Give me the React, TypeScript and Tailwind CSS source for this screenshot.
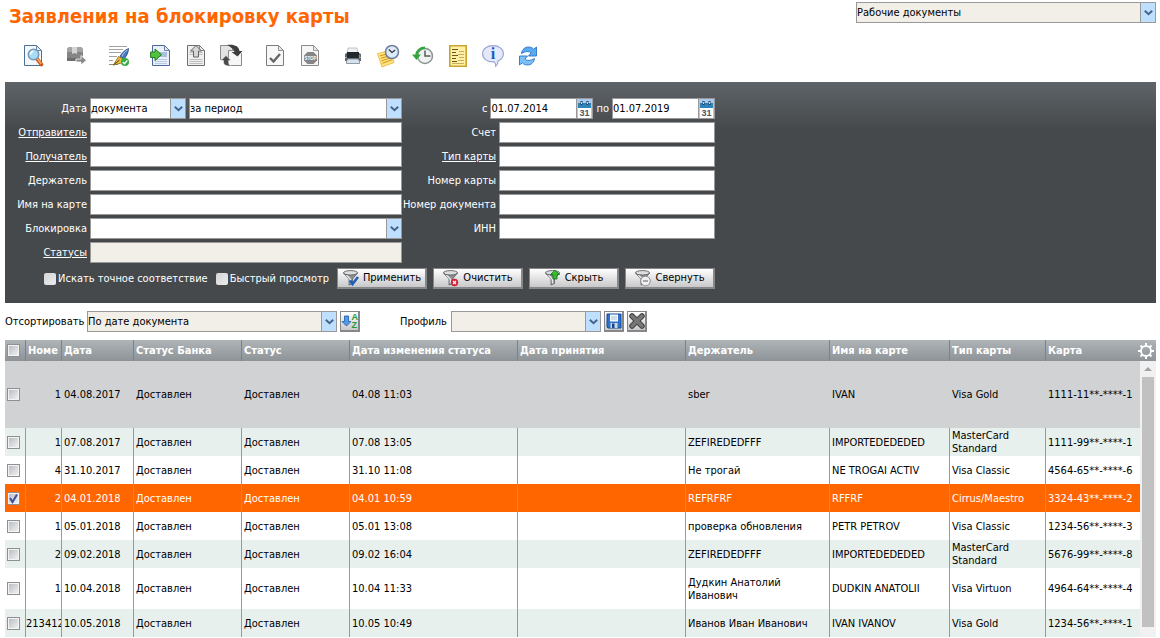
import { ComponentProps, ReactNode, useState } from "react";

/* ---------------- TYPES ---------------- */

interface CardRequest {
  id: number;
  number: string;
  date: string;
  changedAt: string;
  holder: string;
  cardName: string;
  cardType: string;
  card: string;
  height: string;
}

/* ---------------- DATA ---------------- */

const REQUESTS: CardRequest[] = [
  { id: 1, number: "1", date: "04.08.2017", changedAt: "04.08 11:03", holder: "sber", cardName: "IVAN", cardType: "Visa Gold", card: "1111-11**-****-1", height: "h-[67px]" },
  { id: 2, number: "1", date: "07.08.2017", changedAt: "07.08 13:05", holder: "ZEFIREDEDFFF", cardName: "IMPORTEDEDEDED", cardType: "MasterCard Standard", card: "1111-99**-****-1", height: "h-7" },
  { id: 3, number: "4", date: "31.10.2017", changedAt: "31.10 11:08", holder: "Не трогай", cardName: "NE TROGAI ACTIV", cardType: "Visa Classic", card: "4564-65**-****-6", height: "h-7" },
  { id: 4, number: "2", date: "04.01.2018", changedAt: "04.01 10:59", holder: "REFRFRF", cardName: "RFFRF", cardType: "Cirrus/Maestro", card: "3324-43**-****-2", height: "h-7" },
  { id: 5, number: "1", date: "05.01.2018", changedAt: "05.01 13:08", holder: "проверка обновления", cardName: "PETR PETROV", cardType: "Visa Classic", card: "1234-56**-****-3", height: "h-7" },
  { id: 6, number: "2", date: "09.02.2018", changedAt: "09.02 16:04", holder: "ZEFIREDEDFFF", cardName: "IMPORTEDEDEDED", cardType: "MasterCard Standard", card: "5676-99**-****-8", height: "h-7" },
  { id: 7, number: "1", date: "10.04.2018", changedAt: "10.04 11:33", holder: "Дудкин Анатолий Иванович", cardName: "DUDKIN ANATOLII", cardType: "Visa Virtuon", card: "4964-64**-****-4", height: "h-[41px]" },
  { id: 8, number: "213412", date: "10.05.2018", changedAt: "10.05 10:49", holder: "Иванов Иван Иванович", cardName: "IVAN IVANOV", cardType: "Visa Gold", card: "1234-56**-****-1", height: "h-7" },
];

const COLUMNS = [
  { title: "Номе", width: "w-9" },
  { title: "Дата", width: "w-[72px]" },
  { title: "Статус Банка", width: "w-[108px]" },
  { title: "Статус", width: "w-[108px]" },
  { title: "Дата изменения статуса", width: "w-[168px]" },
  { title: "Дата принятия", width: "w-[168px]" },
  { title: "Держатель", width: "w-36" },
  { title: "Имя на карте", width: "w-[120px]" },
  { title: "Тип карты", width: "w-24" },
  { title: "Карта", width: "" },
];

/* ---------------- TOOLBAR ICONS ---------------- */

function Svg({ children, size = 24 }: { children: ReactNode; size?: number }) {
  return (
    <svg width={size} height={size} viewBox={`0 0 ${size} ${size}`} fill="none" className="shrink-0">
      {children}
    </svg>
  );
}

function Page({ stroke, fill = "#fff", x = 3 }: { stroke: string; fill?: string; x?: number }) {
  return (
    <g transform={`translate(${x} 0)`}>
      <path d="M.5 1.5h12l5 5v15H.5z" fill={fill} stroke={stroke} />
      <path d="M12.5 1.5v5h5z" fill="#e4e8ec" stroke={stroke} strokeWidth=".8" />
    </g>
  );
}

const PreviewIcon = () => (
  <Svg>
    <Page stroke="#4c7193" fill="#f3f8fd" />
    <path d="m16 15 4.500 5.500" stroke="#c9571a" strokeWidth="3.600" strokeLinecap="round" />
    <path d="m16 14.500 4.300 5.300" stroke="#ffab5c" strokeWidth="1.500" />
    <circle cx="12.500" cy="10.500" r="5.200" fill="#a6dcf8" stroke="#7898b3" strokeWidth="1.500" />
    <path d="M9.500 10.500a3.300 3.300 0 0 1 3-3.200" stroke="#fff" strokeWidth="1.500" />
  </Svg>
);

const PackageIcon = () => (
  <Svg>
    <path d="m3 5 2-2h12l2 2v12H3z" fill="#858585" />
    <path d="m3 5 2-2h12l2 2v3H3z" fill="#a4a4a4" />
    <path d="M3 14h16v3H3z" fill="#6d6d6d" />
    <path d="M8 3h5v7l-2.500-1L8 10z" fill="#d4d4d4" />
    <path d="M12 15h5v-3.500l5.500 4.700-5.500 4.800v-3h-5z" fill="#8a8a8a" stroke="#fff" strokeWidth=".8" />
  </Svg>
);

const SignIcon = () => (
  <Svg>
    <path d="M2 2.500h18M2 5.500h14M2 8.500h12M2 12.500h8M2 16.500h4" stroke="#a2a2a2" />
    <path d="M21.500 4.500c-4 1.500-7 5-8.500 8l4 2.500c2.500-3 4.500-6.500 4.500-10.500z" fill="#4277c2" stroke="#24477d" strokeWidth=".8" />
    <path d="M20.500 6c-2.500 1.500-4.500 4-5.500 6.500" stroke="#b5d2f5" />
    <path d="m11.500 12.500 5.500 3-2.500 3.500-8 2z" fill="#e9bd45" stroke="#8f6a17" strokeWidth=".8" />
    <path d="m6.500 21 6-5" stroke="#5f460f" strokeWidth="1" />
    <path d="M2 20.500h9" stroke="#7e6b3a" strokeWidth=".8" />
    <circle cx="18" cy="18" r="4" fill="#35ad45" />
    <path d="m15.800 18 1.700 1.800 2.900-3.400" stroke="#fff" strokeWidth="1.400" />
  </Svg>
);

const ImportIcon = () => (
  <Svg>
    <Page stroke="#4b689c" fill="#e9f0fa" x={2} />
    <path d="M6 8h11v5H6z" fill="#a9bfde" />
    <path d="M5 15.500h12M5 17.500h12M5 19.500h12" stroke="#b9cbe4" />
    <path d="M.6 8H5V5l6.500 5.700L5 16.500v-3H.6z" fill="#54c23c" stroke="#1f7a1f" />
  </Svg>
);

const ExportIcon = () => (
  <Svg>
    <Page stroke="#6f6f6f" fill="#f0f0f0" x={2} />
    <path d="M4.500 8.500h13M4.500 10.500h13M4.500 15.500h13M4.500 17.500h13M4.500 19.500h13" stroke="#bdbdbd" />
    <path d="m11 1.500 5.500 5.500h-3v6h-5V7h-3z" fill="#d6d6d6" stroke="#646464" />
  </Svg>
);

const ExchangeIcon = () => (
  <Svg>
    <path d="M.5 1.500h9l3 3v11H.5z" fill="#e3e3e3" stroke="#8b8b8b" />
    <path d="M8.500 6.500h10l3 3v12h-13z" fill="#f6f6f6" stroke="#8b8b8b" />
    <path d="M7 1c7-1 12 1 12.500 6h3L17.500 12.500 11.500 8h3c-.5-3-3.500-5-7.500-7z" fill="#3c3c3c" />
    <path d="m6 11.500 5 5H8.500v1.800c0 1.800.9 2.800 2.500 3.700-4.500.3-7.500-1.200-7.500-4v-1.500H1z" fill="#4a4a4a" stroke="#eee" strokeWidth=".6" />
  </Svg>
);

const CheckDocIcon = () => (
  <Svg>
    <Page stroke="#7c7c7c" fill="#f8f8f8" />
    <path d="m7 14 3.500 3.500L17 10" stroke="#666" strokeWidth="2.400" />
  </Svg>
);

const StopDocIcon = () => (
  <Svg>
    <Page stroke="#8a8a8a" fill="#f6f6f6" />
    <path d="M9.500 8h6l3.500 3.500v5L15.500 20h-6L6 16.500v-5z" fill="#858585" />
    <text x="12.500" y="16" textAnchor="middle" fontSize="4.500" fontWeight="bold" fontFamily="Liberation Sans, sans-serif" fill="#fff">STOP</text>
  </Svg>
);

const PrintIcon = () => (
  <Svg>
    <path d="M7 4h9l1 6H6z" fill="#f1f1f1" stroke="#b5b5b5" strokeWidth=".8" />
    <path d="m4 10 2-1h12l2 1v7H4z" fill="#5d656b" />
    <path d="M6 8h12v6H6z" fill="#23282d" />
    <path d="M4 13.500h2M18 13.500h2" stroke="#a5adb2" />
    <path d="m5.500 17 1.500-2h10l1.500 2v2.500h-13z" fill="#d4e3f0" stroke="#7b8389" strokeWidth=".8" />
    <circle cx="18.500" cy="12" r=".8" fill="#65d365" />
  </Svg>
);

const NotesClockIcon = () => (
  <Svg>
    <path d="m1.500 9.500 13-3 3.500 12-12 4.500z" fill="#ffe27a" stroke="#e8b63a" strokeWidth=".8" />
    <path d="m4 11.800 10-2.500M4.800 14.300l10.200-3M5.500 16.800l10.200-3.300M6.300 19.300l9.800-3.600" stroke="#cf9520" strokeWidth="1" />
    <circle cx="16" cy="8" r="6.500" fill="#dcebfb" stroke="#71809b" strokeWidth="1.600" />
    <path d="M12.800 5.500 16 8.500l3.200-2.500" stroke="#333" strokeWidth="1.200" />
  </Svg>
);

const HistoryIcon = () => (
  <Svg>
    <circle cx="14" cy="12" r="7.500" fill="#edf1ef" stroke="#8b9691" strokeWidth="1.500" />
    <path d="M14 6.500V12h5.500" stroke="#555f5a" strokeWidth="1.500" />
    <path d="M14 3.800c-5 0-8.200 3-8.600 7" stroke="#2ea838" strokeWidth="2.400" />
    <path d="M1 10.500h9L5.500 16z" fill="#2ea838" />
  </Svg>
);

const LogIcon = () => (
  <Svg>
    <path d="M3.800 1.800h16.400v20.400H3.800z" fill="#fff0a6" stroke="#c9a42f" strokeWidth="1.600" />
    <path d="M6 5.500h6M6 8.500h4M6 11.500h6M6 14.500h4M6 17.500h5" stroke="#6d571d" />
    <path d="M13 7.500h5M12 10.500h6M13 13.500h5M12 16.500h6M6 19.500h12" stroke="#c9ae62" />
  </Svg>
);

const InfoIcon = () => (
  <Svg>
    <path d="M12 1.600c6 0 10.400 3.400 10.400 8.200 0 3.400-2.200 5.800-5.400 7.200.2 2-.6 3.800-2.300 5.200.2-2-.4-3.500-1.700-4.300-6.500.3-11.400-3.100-11.400-8.100 0-4.800 4.400-8.200 10.400-8.200z" fill="#e4e8fb" stroke="#99a1cd" strokeWidth="1.100" />
    <text x="12" y="15" textAnchor="middle" fontSize="16" fontWeight="bold" fontFamily="Liberation Serif, serif" fill="#145cc4">i</text>
  </Svg>
);

const RefreshIcon = () => (
  <Svg>
    <path d="M5.500 9.500C6 5 9.500 3 12.500 3c2.200 0 4 .8 5.200 2.200L20.500 3v9h-8l2.600-3.200c-2.300-1.900-5.600-1.500-9.600.7z" fill="#5aaaf0" stroke="#2b74c8" strokeWidth=".9" />
    <path d="M18.500 14.500C18 19 14.500 21 11.500 21c-2.200 0-4-.8-5.200-2.200L3.500 21v-9h8l-2.600 3.200c2.300 1.900 5.600 1.500 9.600-.7z" fill="#7cc0f7" stroke="#2b74c8" strokeWidth=".9" />
  </Svg>
);

const GearIcon = () => (
  <Svg size={18}>
    <g stroke="#fff">
      <path
        d="M9 1v3M9 14v3M1 9h3M14 9h3M3.500 3.500l2 2M12.500 12.500l2 2M14.500 3.500l-2 2M5.500 12.500l-2 2"
        strokeWidth="2"
      />
      <circle cx="9" cy="9" r="5" strokeWidth="1.800" />
    </g>
  </Svg>
);

/* ---------------- FILTER BUTTON ICONS ---------------- */

function Funnel({ children }: { children: ReactNode }) {
  return (
    <Svg size={18}>
      <path d="m1.500 4 5.500 6v6l3.500-1.500V10L15.500 4z" fill="#8d9093" stroke="#5c5f62" strokeWidth=".8" />
      <path d="m4.500 6 4 4.500v4" stroke="#e8e8e8" strokeWidth="1.500" />
      <ellipse cx="8.500" cy="3.800" rx="7" ry="2.200" fill="#dcdee0" stroke="#5c5f62" strokeWidth=".9" />
      {children}
    </Svg>
  );
}

const ApplyIcon = () => (
  <Funnel>
    <path d="m8 11.500 2.500 3.500 5.500-7" stroke="#1e5fb8" strokeWidth="2.600" />
  </Funnel>
);

const ClearIcon = () => (
  <Funnel>
    <circle cx="12.500" cy="13.500" r="3.700" fill="#cf2233" />
    <path d="m11 12 3 3m0-3-3 3" stroke="#fff" strokeWidth="1.200" />
  </Funnel>
);

const HideIcon = () => (
  <Funnel>
    <path d="m11 1 4.500 4.500H13V10H9V5.500H6.500z" fill="#35bf2d" stroke="#11711b" strokeWidth=".8" />
  </Funnel>
);

const CollapseIcon = () => (
  <Funnel>
    <circle cx="11.500" cy="12" r="4.800" fill="#efefef" stroke="#8b8b8b" />
    <path d="M9 12h5" stroke="#777" strokeWidth="1.200" />
  </Funnel>
);

const CalendarIcon = () => (
  <svg width="15" height="19" viewBox="0 0 15 19" fill="none">
    <path d="M1 4h13v5H1z" fill="#2f83bb" />
    <path d="M1 9h13v10H1z" fill="#fff" />
    <path d="M4.500 2v4M10.500 2v4" stroke="#24455f" strokeWidth="2" />
    <path d="M4.500 3v2M10.500 3v2" stroke="#fff" strokeWidth=".8" />
    <text x="7.500" y="17" textAnchor="middle" fontSize="9" fontWeight="bold" fontFamily="Liberation Sans, sans-serif" fill="#4a5560">31</text>
  </svg>
);

const SortIcon = () => (
  <Svg size={18}>
    <path d="M3.500 4h4v5.500H10L5.500 14 1 9.500h2.500z" fill="#4f9be6" stroke="#1c5ba8" strokeWidth=".8" />
    <g fontSize="9" fontWeight="bold" fontFamily="Liberation Sans, sans-serif" fill="#1f9a3a">
      <text x="10.500" y="8">A</text>
      <text x="10.500" y="16">Z</text>
    </g>
  </Svg>
);

const SaveIcon = () => (
  <Svg size={18}>
    <path d="M2 2h14v14H3l-1-1z" fill="#2e72cc" stroke="#174a93" />
    <path d="M5 2.500h8v7H5z" fill="#f4f8fd" />
    <path d="M6 5h6M6 7h6" stroke="#9fb5d0" strokeWidth=".8" />
    <path d="M5.500 11h7v5h-7z" fill="#c9d8ea" />
    <path d="M7 11.500h2.500V16H7z" fill="#1d4480" />
  </Svg>
);

const DeleteIcon = () => (
  <Svg size={18}>
    <path d="m4 4 10 10M14 4 4 14" stroke="#424242" strokeWidth="5.500" strokeLinecap="round" />
    <path d="m4 4 10 10M14 4 4 14" stroke="#777" strokeWidth="3.500" strokeLinecap="round" />
  </Svg>
);

/* ---------------- CONTROLS ---------------- */

function TextField({ className = "bg-white", ...props }: ComponentProps<"input">) {
  return (
    <input
      type="text"
      className={`h-[21px] w-full min-w-0 border border-[#999] pl-px text-black outline-none ${className}`}
      {...props}
    />
  );
}

function SelectField({
  options,
  width,
  background = "bg-[#f2eee8]",
  ...props
}: ComponentProps<"select"> & { options: string[]; width: string; background?: string }) {
  return (
    <div className={`relative flex h-[21px] border border-[#999] ${background} ${width}`}>
      <select className="w-full appearance-none pr-4 text-black outline-none" {...props}>
        {options.map((option) => (
          <option key={option}>{option}</option>
        ))}
      </select>
      <span className="pointer-events-none absolute inset-y-0 right-0 flex w-[15px] items-center justify-center border-l border-[#999] bg-[#bfdfff]">
        <svg width="9" height="6" viewBox="0 0 9 6" fill="none">
          <path d="m.8.8 3.700 3.400L8.200.8" stroke="#44658c" strokeWidth="2" />
        </svg>
      </span>
    </div>
  );
}

function DateField({ id, value }: { id: string; value: string }) {
  return (
    <div className="flex h-[21px] w-[103px] border border-[#999] bg-white">
      <input id={id} type="text" defaultValue={value} className="w-0 grow text-black outline-none" />
      <button type="button" aria-label="Календарь" className="flex w-4 items-center justify-center border-l border-[#999] bg-[#a9c9ee]">
        <CalendarIcon />
      </button>
    </div>
  );
}

function FieldLabel({ htmlFor, children, link }: { htmlFor: string; children: string; link?: boolean }) {
  return (
    <label htmlFor={htmlFor} className="whitespace-nowrap pr-[3px] text-right">
      {link ? <a href="#" className="underline">{children}</a> : children}
    </label>
  );
}

function FilterButton({ icon, children }: { icon: ReactNode; children: string }) {
  return (
    <button
      type="button"
      className="flex h-[21px] w-[90px] items-center justify-center gap-[3px] border border-r-2 border-b-2 border-[#85878a] bg-linear-to-b from-white to-[#c9c9cb] text-black"
    >
      {icon}
      {children}
    </button>
  );
}

function IconButton({ label, children }: { label: string; children: ReactNode }) {
  return (
    <button
      type="button"
      aria-label={label}
      className="flex h-[21px] w-5 items-center justify-center border border-r-2 border-b-2 border-[#85878a] bg-linear-to-b from-white to-[#c9c9cb]"
    >
      {children}
    </button>
  );
}

function RowCheckbox(props: ComponentProps<"input">) {
  return (
    <span className="ml-[2px] grid size-[13px]">
      <input
        type="checkbox"
        className="peer col-start-1 row-start-1 size-[13px] appearance-none border border-[#8e8f8f] bg-linear-to-br from-[#b4b8c0] to-[#f6f6f6] shadow-[inset_0_0_0_1px_#f4f4f4]"
        {...props}
      />
      <svg viewBox="0 0 13 13" fill="none" className="pointer-events-none col-start-1 row-start-1 hidden size-[13px] peer-checked:block">
        <path d="m3 6 2.500 4L10 2.500" stroke="#3a4f9a" strokeWidth="2" />
      </svg>
    </span>
  );
}

/* ---------------- SECTIONS ---------------- */

const TOOLBAR = [
  [{ label: "Просмотр", icon: <PreviewIcon /> }],
  [{ label: "Отправить", icon: <PackageIcon /> }],
  [{ label: "Подписать", icon: <SignIcon /> }],
  [
    { label: "Импорт", icon: <ImportIcon /> },
    { label: "Экспорт", icon: <ExportIcon /> },
    { label: "Обмен", icon: <ExchangeIcon /> },
  ],
  [
    { label: "Принять", icon: <CheckDocIcon /> },
    { label: "Отказать", icon: <StopDocIcon /> },
  ],
  [
    { label: "Печать", icon: <PrintIcon /> },
    { label: "Заметки", icon: <NotesClockIcon /> },
    { label: "История", icon: <HistoryIcon /> },
    { label: "Журнал", icon: <LogIcon /> },
    { label: "Информация", icon: <InfoIcon /> },
    { label: "Обновить", icon: <RefreshIcon /> },
  ],
];

function Toolbar() {
  return (
    <div className="flex gap-[19px] pt-[14px] pl-4">
      {TOOLBAR.map((group) => (
        <div key={group[0].label} className="flex gap-[11px]">
          {group.map((item) => (
            <button key={item.label} type="button" aria-label={item.label}>
              {item.icon}
            </button>
          ))}
        </div>
      ))}
    </div>
  );
}

function FilterPanel() {
  const panelCheckbox =
    "size-3 appearance-none rounded-xs bg-linear-to-br from-[#d5d5d5] to-[#ececec] checked:bg-[#44658c]";

  return (
    <form className="mt-[14px] bg-[#45494c] bg-linear-to-b from-[#5f6468] to-[#45494c] to-[48px] pt-4 pb-[14px] text-white">
      <div className="flex w-fit">
        <div className="grid grid-cols-[85px_312px] items-center gap-y-[3px]">
          <FieldLabel htmlFor="date-kind">Дата</FieldLabel>
          <div className="flex gap-[3px]">
            <SelectField id="date-kind" options={["документа"]} width="w-24" background="bg-white" />
            <SelectField aria-label="Период" options={["за период"]} width="grow" background="bg-white" />
          </div>
          <FieldLabel htmlFor="sender" link>Отправитель</FieldLabel>
          <TextField id="sender" />
          <FieldLabel htmlFor="receiver" link>Получатель</FieldLabel>
          <TextField id="receiver" />
          <FieldLabel htmlFor="holder">Держатель</FieldLabel>
          <TextField id="holder" />
          <FieldLabel htmlFor="card-name">Имя на карте</FieldLabel>
          <TextField id="card-name" />
          <FieldLabel htmlFor="blocking">Блокировка</FieldLabel>
          <SelectField id="blocking" options={[""]} width="w-full" background="bg-white" />
          <FieldLabel htmlFor="statuses" link>Статусы</FieldLabel>
          <TextField id="statuses" className="bg-[#f2eee8]" />
        </div>

        <div className="grid grid-cols-[97px_216px] content-start items-center gap-y-[3px]">
          <div className="col-span-2 flex items-center justify-end">
            <FieldLabel htmlFor="date-from">с</FieldLabel>
            <DateField id="date-from" value="01.07.2014" />
            <span className="pl-[3px]">
              <FieldLabel htmlFor="date-to">по</FieldLabel>
            </span>
            <DateField id="date-to" value="01.07.2019" />
          </div>
          <FieldLabel htmlFor="account">Счет</FieldLabel>
          <TextField id="account" />
          <FieldLabel htmlFor="card-type" link>Тип карты</FieldLabel>
          <TextField id="card-type" />
          <FieldLabel htmlFor="card-number">Номер карты</FieldLabel>
          <TextField id="card-number" />
          <FieldLabel htmlFor="document-number">Номер документа</FieldLabel>
          <TextField id="document-number" />
          <FieldLabel htmlFor="inn">ИНН</FieldLabel>
          <TextField id="inn" />
        </div>
      </div>

      <div className="mt-[5px] flex w-[710px] items-center justify-end gap-2 whitespace-nowrap">
        <label className="flex items-center gap-[2px]">
          <input type="checkbox" className={panelCheckbox} />
          Искать точное соответствие
        </label>
        <label className="flex items-center gap-[2px]">
          <input type="checkbox" className={panelCheckbox} />
          Быстрый просмотр
        </label>
        <div className="flex gap-[6px]">
          <FilterButton icon={<ApplyIcon />}>Применить</FilterButton>
          <FilterButton icon={<ClearIcon />}>Очистить</FilterButton>
          <FilterButton icon={<HideIcon />}>Скрыть</FilterButton>
          <FilterButton icon={<CollapseIcon />}>Свернуть</FilterButton>
        </div>
      </div>
    </form>
  );
}

function SortBar() {
  return (
    <div className="flex items-center py-2">
      <label htmlFor="sort" className="w-[82px] whitespace-nowrap">Отсортировать</label>
      <SelectField id="sort" options={["По дате документа"]} width="w-[250px]" />
      <div className="ml-[3px]">
        <IconButton label="Порядок сортировки"><SortIcon /></IconButton>
      </div>
      <label htmlFor="profile" className="ml-10 w-[51px]">Профиль</label>
      <SelectField id="profile" options={[""]} width="w-[150px]" />
      <div className="ml-[3px] flex gap-[3px]">
        <IconButton label="Сохранить профиль"><SaveIcon /></IconButton>
        <IconButton label="Удалить профиль"><DeleteIcon /></IconButton>
      </div>
    </div>
  );
}

function RequestsTable() {
  const [checked, setChecked] = useState<number[]>([4]);

  const toggle = (id: number) =>
    setChecked((ids) => (ids.includes(id) ? ids.filter((i) => i !== id) : [...ids, id]));

  const rowColor = (id: number, index: number) => {
    if (checked.includes(id)) return "bg-[#ff6600] text-white";
    if (index === 0) return "bg-[#d1d2d4]";
    return index % 2 ? "bg-[#e8f0ed]" : "bg-white";
  };

  return (
    <div className="flex">
      <table className="w-0 grow table-fixed border-separate border-spacing-0 leading-[13px]">
        <thead>
          <tr className="h-[21px] bg-linear-to-b from-[#afb4b7] to-[#8d9397] text-left text-white">
            <th className="w-[21px] border-r border-[#7d8286] p-0">
              <RowCheckbox aria-label="Выбрать все" />
            </th>
            {COLUMNS.map((column) => (
              <th
                key={column.title}
                className={`overflow-hidden border-r border-[#7d8286] p-0 pl-[2px] font-bold whitespace-nowrap last:border-r-0 ${column.width}`}
              >
                {column.title}
              </th>
            ))}
          </tr>
        </thead>
        <tbody>
          {REQUESTS.map((row, index) => {
            const border = index === 0 ? "border-transparent" : "border-[#999]";
            const cell = `border-r ${border} p-0 pl-[2px]`;

            return (
              <tr key={row.id} className={`${row.height} ${rowColor(row.id, index)}`}>
                <td className={`border-r ${border} p-0`}>
                  <RowCheckbox
                    aria-label={`Выбрать ${row.date}`}
                    checked={checked.includes(row.id)}
                    onChange={() => toggle(row.id)}
                  />
                </td>
                <td className={`border-r ${border} overflow-hidden p-0 text-right whitespace-nowrap`}>{row.number}</td>
                <td className={cell}>{row.date}</td>
                <td className={cell}>Доставлен</td>
                <td className={cell}>Доставлен</td>
                <td className={cell}>{row.changedAt}</td>
                <td className={cell} />
                <td className={cell}>{row.holder}</td>
                <td className={cell}>{row.cardName}</td>
                <td className={cell}>{row.cardType}</td>
                <td className="overflow-hidden p-0 pl-[2px] whitespace-nowrap">{row.card}</td>
              </tr>
            );
          })}
        </tbody>
      </table>

      {/* column settings + scroll rail */}
      <div className="flex w-4 flex-col bg-[#f1f1f1]">
        <button
          type="button"
          aria-label="Настройка колонок"
          className="flex h-[21px] w-4 items-center justify-end bg-linear-to-b from-[#afb4b7] to-[#8d9397] pr-px"
        >
          <GearIcon />
        </button>
        <div className="flex h-4 items-center justify-center">
          <svg width="8" height="4" viewBox="0 0 8 4">
            <path d="M4 0 8 4H0z" fill="#a3a3a3" />
          </svg>
        </div>
        <div className="mx-[2px] mb-[10px] grow bg-[#c1c1c1]" />
      </div>
    </div>
  );
}

export default function App() {
  return (
    <main className="overflow-hidden bg-white pr-1 pl-[5px] font-['DejaVu_Sans_Condensed','DejaVu_Sans',sans-serif] text-[11px] leading-4 text-black">
      <header className="flex items-start justify-between pt-[2px]">
        <h1 className="pl-1 text-xl leading-7 font-bold text-[#ff6600]">Заявления на блокировку карты</h1>
        <SelectField aria-label="Раздел" options={["Рабочие документы"]} width="w-[300px]" />
      </header>
      <Toolbar />
      <FilterPanel />
      <SortBar />
      <RequestsTable />
    </main>
  );
}
